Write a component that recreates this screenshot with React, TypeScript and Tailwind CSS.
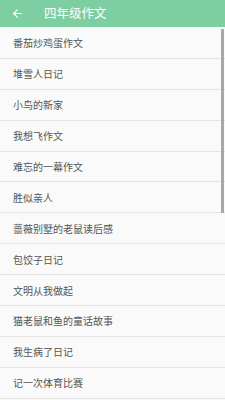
import { ArrowLeft } from 'lucide-react'

const items = [
  '番茄炒鸡蛋作文',
  '堆雪人日记',
  '小鸟的新家',
  '我想飞作文',
  '难忘的一幕作文',
  '胜似亲人',
  '蔷薇别墅的老鼠读后感',
  '包饺子日记',
  '文明从我做起',
  '猫老鼠和鱼的童话故事',
  '我生病了日记',
  '记一次体育比赛',
]

export default function App() {
  return (
    <div
      className="relative h-[400px] w-[225px] overflow-hidden bg-[#fafafa]"
      style={{ fontFamily: '"Noto Sans CJK SC", "Noto Sans", sans-serif' }}
    >
      {/* Toolbar */}
      <header className="flex h-[27px] items-center bg-[#7dcea0] text-white">
        <ArrowLeft className="ml-[11px] h-[13px] w-[13px]" strokeWidth={2} />
        <span className="ml-[20px] text-[12.5px] leading-none">四年级作文</span>
      </header>

      {/* List */}
      <ul className="pt-px">
        {items.map(item => (
          <li
            key={item}
            className="flex h-[30.9px] items-center border-b border-[#e4e4e4] pl-[13px] text-[10px] text-[#555555]"
          >
            {item}
          </li>
        ))}
      </ul>

      {/* Scrollbar */}
      <div className="absolute right-[1px] top-[29px] h-[184px] w-[3px] bg-[#a8a8a8]" />
    </div>
  )
}
